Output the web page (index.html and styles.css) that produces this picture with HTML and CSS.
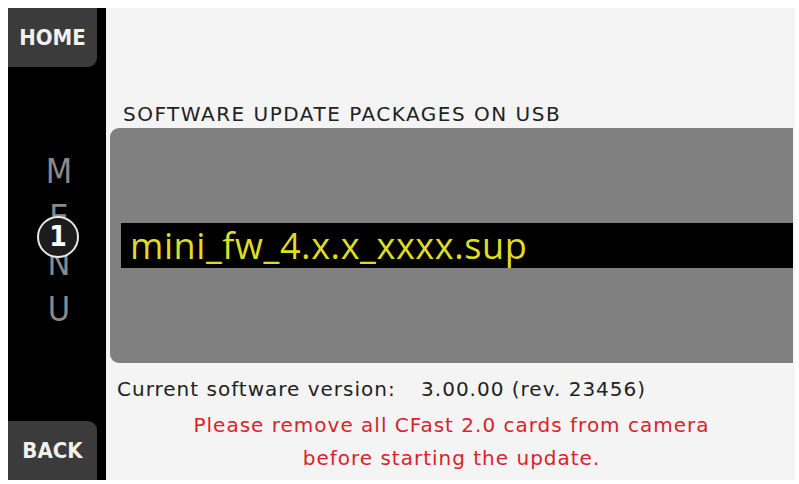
FILE: index.html
```html
<!DOCTYPE html>
<html>
<head>
  <meta charset="utf-8">
  <title>Software Update</title>
  <link rel="stylesheet" href="styles.css">
</head>
<body>
  <div id="screen">
    <!-- Left side: navigation column -->
    <div id="sideBar">
      <div class="navButton home">HOME</div>
      <div id="menuLabel">
        <span>M</span>
        <span>E</span>
        <span>N</span>
        <span>U</span>
        <div class="badge">1</div>
      </div>
      <div class="navButton back">BACK</div>
    </div>

    <!-- Right side: update packages -->
    <div id="content">
      <h3>SOFTWARE UPDATE PACKAGES ON USB</h3>
      <div id="packageList">
        <div class="package selected">mini_fw_4.x.x_xxxx.sup</div>
      </div>
      <p id="version">
        <span class="label">Current software version:</span>
        <span class="value">3.00.00 (rev. 23456)</span>
      </p>
      <p id="warning">Please remove all CFast 2.0 cards from camera<br>before starting the update.</p>
    </div>
  </div>
</body>
</html>
```

FILE: styles.css
```css
/* General Page Styling */
body {
  margin: 0;
  padding: 0;
  background-color: #fff;
  font-family: "DejaVu Sans", sans-serif;
}

/* Screen frame */
#screen {
  display: flex;
  gap: 4px;
  margin: 8px 0 0 8px;
  width: 787px;
  height: 472px;
  background: #f4f4f4;
}

/* Navigation column */
#sideBar {
  display: flex;
  flex-direction: column;
  width: 98px;
  flex-shrink: 0;
  background: #000;
}

.navButton {
  width: 89px;
  height: 59px;
  background: #3b3b3b;
  color: #f0f0f0;
  font-family: "DejaVu Sans Condensed", "DejaVu Sans", sans-serif;
  font-size: 22px;
  font-weight: bold;
  display: flex;
  align-items: center;
  justify-content: center;
}

.home {
  border-bottom-right-radius: 9px;
}

.back {
  margin-top: auto;
  border-top-right-radius: 9px;
}

#menuLabel {
  position: relative;
  display: flex;
  flex-direction: column;
  align-items: center;
  margin-top: 81px;
  padding-left: 4px;
  color: #8a8a8a;
  font-family: "DejaVu Sans Condensed", "DejaVu Sans", sans-serif;
  font-weight: 200;
  font-size: 34px;
  line-height: 46px;
}

.badge {
  position: absolute;
  left: 29px;
  top: 68px;
  width: 38px;
  height: 38px;
  border: 2px solid #e8e8e8;
  border-radius: 50%;
  background: #1c1c1c;
  color: #fff;
  font-family: "DejaVu Sans Condensed", "DejaVu Sans", sans-serif;
  font-weight: bold;
  font-size: 28px;
  line-height: 38px;
  text-align: center;
}

/* Content area */
#content {
  flex: 1;
  display: flex;
  flex-direction: column;
  padding-right: 2px;
}

h3 {
  margin: 94px 0 2px 13px;
  font-size: 20px;
  font-weight: normal;
  letter-spacing: 1.5px;
  color: #222;
}

#packageList {
  height: 235px;
  background: #808080;
  border-radius: 9px 0 0 9px;
  display: flex;
  flex-direction: column;
  justify-content: center;
  padding-left: 11px;
}

.package {
  height: 45px;
  line-height: 45px;
  padding-left: 9px;
  font-family: "Open Sans", sans-serif;
  font-size: 36px;
  letter-spacing: 0.6px;
  color: #dede20;
}

.selected {
  background: #000;
}

#version {
  margin: 14px 0 0 7px;
  font-size: 20px;
  letter-spacing: 1px;
  color: #222;
}

#version .value {
  margin-left: 18px;
}

#warning {
  margin: 8px 0 0 0;
  text-align: center;
  font-size: 20px;
  letter-spacing: 1px;
  line-height: 33px;
  color: #d8232a;
}
```
